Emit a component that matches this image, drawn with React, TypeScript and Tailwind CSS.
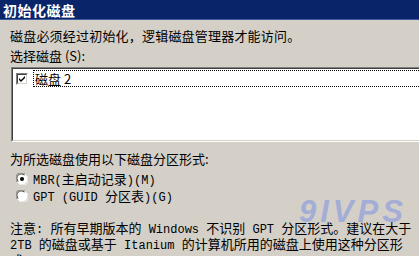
import React from "react";

const font = { fontFamily: '"Noto Sans CJK SC", "Noto Sans", sans-serif' };
const mono = { fontFamily: '"Liberation Mono", monospace' };

// half-width latin in the SimSun style
function L({ children }: { children: React.ReactNode }) {
  return (
    <span className="text-[12px] whitespace-pre" style={mono}>
      {children}
    </span>
  );
}

function CheckBox() {
  return (
    <span className="relative inline-block w-[12px] h-[12px] border-t border-l border-[#808080] border-b border-r border-b-white border-r-white bg-white">
      <span className="absolute inset-0 border-t border-l border-[#404040] border-b border-r border-b-[#d4d0c8] border-r-[#d4d0c8]" />
      <svg className="absolute left-[1px] top-[1px]" width="8" height="8" viewBox="0 0 8 8">
        <path d="M1 3 L3 5 L7 1 L7 3 L3 7 L1 5 Z" fill="#000" />
      </svg>
    </span>
  );
}

function Radio({ checked }: { checked?: boolean }) {
  return (
    <svg width="12" height="12" viewBox="0 0 12 12" className="shrink-0">
      <circle cx="6" cy="6" r="5.5" fill="#fff" />
      <path d="M1.2 9 A5.2 5.2 0 0 1 9 1.2" stroke="#808080" strokeWidth="1" fill="none" />
      <path d="M2.2 8.4 A4.2 4.2 0 0 1 8.4 2.2" stroke="#404040" strokeWidth="1" fill="none" />
      <path d="M10.8 3 A5.2 5.2 0 0 1 3 10.8" stroke="#f4f4f4" strokeWidth="1" fill="none" />
      {checked && <circle cx="6" cy="6" r="2" fill="#000" />}
    </svg>
  );
}

export default function App() {
  return (
    <div
      className="relative w-[419px] h-[256px] overflow-hidden bg-[#d4d0c8] text-black text-[13px]"
      style={font}
    >
      {/* Title */}
      <div className="h-[20px] bg-[#0a246a] border-b border-[#3a5a9a] pl-[3px] text-white font-bold text-[14px] leading-[20px] tracking-[0.5px]">
        初始化磁盘
      </div>

      <div className="pl-[10px] pt-[8px]">
        <div className="leading-[16px] whitespace-nowrap tracking-[0.2px]">磁盘必须经过初始化，逻辑磁盘管理器才能访问。</div>
        <div className="leading-[16px] whitespace-nowrap mt-[4px]">选择磁盘 (S):</div>

        {/* Disk list */}
        <div className="mt-[3px] ml-[1px] w-[420px] h-[75px] border-t border-l border-[#808080] border-b border-b-white">
          <div className="h-full border-t border-l border-[#404040] border-b border-b-[#d4d0c8] bg-white pt-[1px] pl-[3px]">
            <div className="flex items-center h-[17px]">
              <CheckBox />
              <div className="ml-[5px] flex-1 h-[17px] border border-dotted border-black leading-[15px] pl-[1px] whitespace-nowrap">
                磁盘 2
              </div>
            </div>
          </div>
        </div>

        <div className="mt-[9px] leading-[16px] whitespace-nowrap">为所选磁盘使用以下磁盘分区形式:</div>

        <div className="mt-[4px] ml-[6px] flex flex-col gap-[1px]">
          <div className="flex items-center gap-[5px] h-[16px] whitespace-nowrap">
            <Radio checked />
            <span>
              <L>MBR(</L>主启动记录<L>)(M)</L>
            </span>
          </div>
          <div className="flex items-center gap-[5px] h-[16px] whitespace-nowrap">
            <Radio />
            <span>
              <L>GPT (GUID </L>分区表<L>)(G)</L>
            </span>
          </div>
        </div>

        <div className="mt-[17px] leading-[14px] whitespace-nowrap">
          <div>
            注意<L>: </L>所有早期版本的<L> Windows </L>不识别<L> GPT </L>分区形式。建议在大于
          </div>
          <div>
            <L>2TB </L>的磁盘或基于<L> Itanium </L>的计算机所用的磁盘上使用这种分区形
          </div>
          <div>式。</div>
        </div>
      </div>

      {/* watermark */}
      <div
        className="absolute left-[299px] top-[196px] text-[31px] font-black italic leading-none text-[#8f9fdc] opacity-70 tracking-[4px]"
        style={{ fontFamily: '"Liberation Sans", sans-serif' }}
      >
        9IVPS
      </div>
    </div>
  );
}
